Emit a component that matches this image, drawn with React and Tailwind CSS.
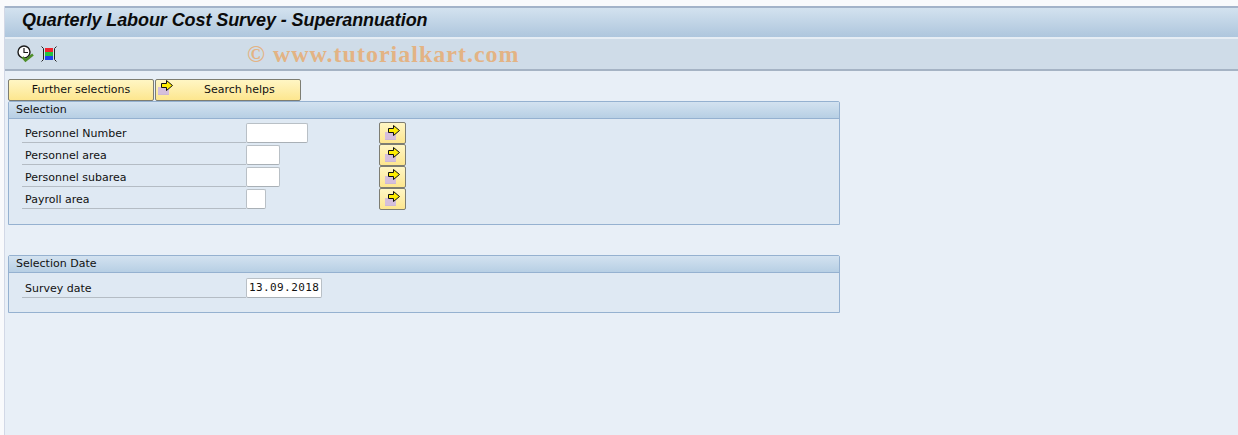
const font = { fontFamily: '"DejaVu Sans", sans-serif' };

function ArrowIcon() {
  return (
    <svg width="16" height="16" viewBox="0 0 16 16" className="block">
      <rect x="0" y="7" width="11" height="8" fill="#d5bfdc" />
      <rect x="0" y="14" width="11" height="1" fill="#cdb8d6" />
      <path d="M3.5 3.5H8.5V0.5L14.5 5.5L8.5 10.5V7.5H3.5Z" fill="#ffee00" stroke="#111" strokeWidth="1" />
    </svg>
  );
}

function ClockIcon() {
  return (
    <svg width="18" height="18" viewBox="0 0 18 18" className="block">
      <circle cx="7" cy="7" r="6" fill="#fff" stroke="#1c1c1c" strokeWidth="1.4" />
      <path d="M7 3V7.5H11" fill="none" stroke="#1c1c1c" strokeWidth="1.2" />
      <path d="M5.5 12L8.5 15.5L16 9.5" fill="none" stroke="#4f8f2a" strokeWidth="2.6" />
    </svg>
  );
}

function LayoutIcon() {
  return (
    <svg width="16" height="16" viewBox="0 0 16 16" className="block">
      <rect x="4" y="2" width="8" height="4" fill="#f0242e" />
      <rect x="4" y="6" width="8" height="4" fill="#22c040" />
      <rect x="4" y="10" width="8" height="4" fill="#1c40f0" />
      <path d="M0.5 0.5L2.5 2.5V13.5L0.5 15.5M15.5 0.5L13.5 2.5V13.5L15.5 15.5" fill="none" stroke="#222" strokeWidth="1" />
    </svg>
  );
}

function Row({ label, inputW, value }) {
  return (
    <div className="flex h-[22px] items-start">
      <div className="w-[224px] h-[21px] border-b border-[#b4bcc4] pl-[3px] pt-[2px] text-[11px] leading-[20px] text-[#111]">{label}</div>
      <div
        className="h-[20px] mt-px bg-white border border-[#b9c0c6] border-b-[#a9b0b6] rounded-[2px] text-[11px] tracking-[0.4px] leading-[18px] pl-[2px] text-[#111]"
        style={{ width: inputW, fontFamily: '"DejaVu Sans Mono", monospace' }}
      >
        {value}
      </div>
    </div>
  );
}

function ArrowButton() {
  return (
    <div className="w-[27px] h-[22px] shrink-0 flex items-center justify-center rounded-[2px] border border-[#7d7d72] bg-gradient-to-b from-[#fff6c4] to-[#fde68e]">
      <ArrowIcon />
    </div>
  );
}

function GroupHeader({ title }) {
  return (
    <div className="h-[17px] pl-[7px] text-[11px] leading-[15px] text-[#111] bg-gradient-to-b from-[#d3e2f0] to-[#b7cfe4] border-b border-[#95b1d0]">
      {title}
    </div>
  );
}

export default function App() {
  const rows = [
    ['Personnel Number', 62],
    ['Personnel area', 34],
    ['Personnel subarea', 34],
    ['Payroll area', 20],
  ];
  return (
    <div className="w-[1238px] h-[435px] overflow-hidden bg-[#f9fafc] pt-[6px] pl-[4px]" style={font}>
      <div className="h-[429px] flex flex-col border-l border-[#d2d8e6] bg-[#e8eff7]">
        <div className="h-[31px] border-t-2 border-[#a3b3c9] bg-gradient-to-b from-[#d3e2ef] to-[#aec6dd] pl-[17px] text-[18px] tracking-[-0.08px] leading-[25px] font-bold italic text-[#0b0b0b] shrink-0"
          style={{ fontFamily: '"Liberation Sans", sans-serif' }}>
          Quarterly Labour Cost Survey - Superannuation
        </div>
        <div className="h-[34px] border-t-2 border-[#e6edf4] border-b-2 border-b-[#a5b3c4] bg-[#cfdce8] flex items-center pl-[12px] shrink-0">
          <ClockIcon />
          <div className="w-[6px]" />
          <LayoutIcon />
          <div className="ml-[190px] text-[24px] font-bold tracking-[1px] text-[#e3b384] leading-none" style={{ fontFamily: '"Liberation Serif", serif' }}>
            © www.tutorialkart.com
          </div>
        </div>
        <div className="flex pl-[3px] pt-[8px] gap-px shrink-0">
          <div className="w-[146px] h-[22px] rounded-[2px] border border-[#7d7d72] bg-gradient-to-b from-[#fff6c4] to-[#fde68e] text-[11px] leading-[20px] text-center text-[#111]">
            Further selections
          </div>
          <div className="w-[146px] h-[22px] rounded-[2px] border border-[#7d7d72] bg-gradient-to-b from-[#fff6c4] to-[#fde68e] text-[11px] leading-[20px] text-[#111] flex items-start pl-[2px]">
            <ArrowIcon />
            <span className="ml-[30px]">Search helps</span>
          </div>
        </div>
        <div className="w-[832px] h-[124px] ml-[3px] border border-[#95b1d0] rounded-t-[2px] bg-[#dfe9f3] shrink-0">
          <GroupHeader title="Selection" />
          <div className="pl-[13px] pt-[3px] flex flex-col">
            {rows.map(([label, w]) => (
              <div key={label} className="flex h-[22px]">
                <div className="w-[357px]">
                  <Row label={label} inputW={w} />
                </div>
                <ArrowButton />
              </div>
            ))}
          </div>
        </div>
        <div className="w-[832px] h-[58px] ml-[3px] mt-[30px] border border-[#95b1d0] rounded-t-[2px] bg-[#dfe9f3] shrink-0">
          <GroupHeader title="Selection Date" />
          <div className="pl-[13px] pt-[4px]">
            <Row label="Survey date" inputW={76} value="13.09.2018" />
          </div>
        </div>
      </div>
    </div>
  );
}
